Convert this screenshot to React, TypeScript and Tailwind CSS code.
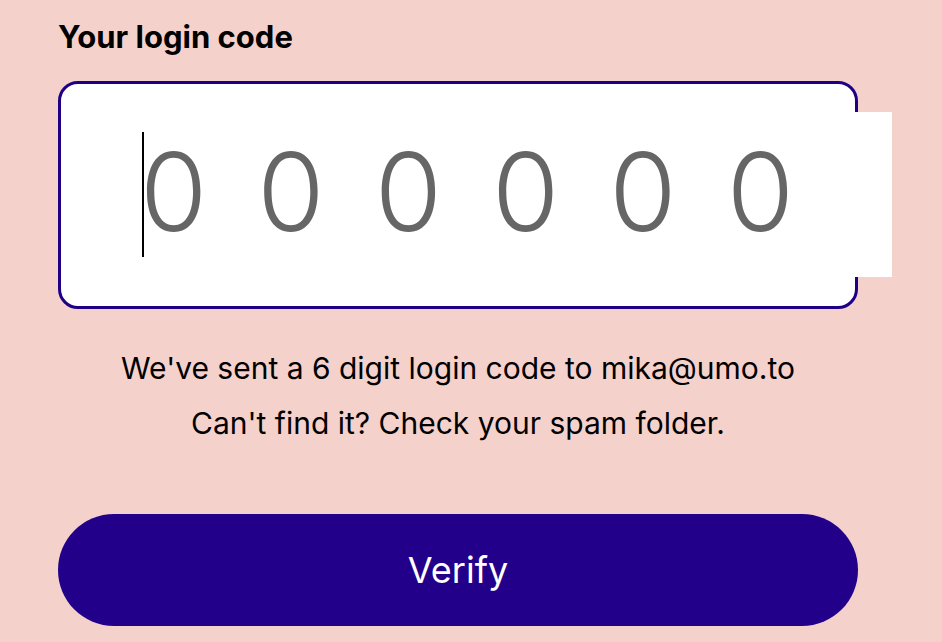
export default function App() {
  return (
    <div className="min-h-[642px] w-[942px] bg-[#f5d1cc] font-['Inter','Liberation_Sans',sans-serif] text-black">
      <div className="w-[800px] ml-[58px] pt-[20px]">
        <h1 className="text-[31px] leading-[34px] font-bold">Your login code</h1>

        <div className="relative mt-[27px] h-[228px] rounded-[20px] border-[3px] border-[#1e0087] bg-white pt-[28px]">
          <div className="relative h-[165px] w-[831px] bg-white">
            <input
              type="text"
              inputMode="numeric"
              maxLength={6}
              placeholder="000000"
              className="h-full w-full bg-transparent pb-[8px] pl-[79px] text-[109px] font-light tracking-[50px] text-[#666] placeholder:text-[#666] outline-none caret-transparent"
            />
            <div className="absolute left-[81px] top-[20px] h-[125px] w-[2px] bg-black" />
          </div>
        </div>

        <div className="mt-[32px] text-center text-[30px] leading-[55px]">
          <p>We've sent a 6 digit login code to mika@umo.to</p>
          <p>Can't find it? Check your spam folder.</p>
        </div>

        <button className="mt-[63px] h-[112px] w-full rounded-full bg-[#22008a] text-[36px] text-white">
          Verify
        </button>
      </div>
    </div>
  )
}
